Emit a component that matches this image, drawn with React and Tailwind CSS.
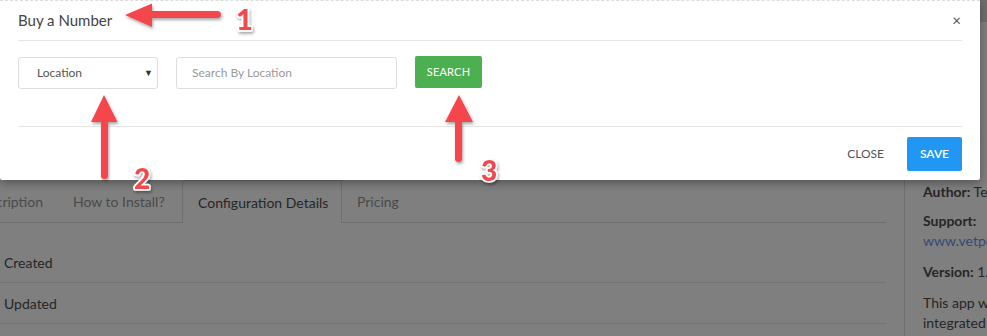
import React from "react";

function Arrows() {
  return (
    <svg
      className="absolute left-0 top-0 pointer-events-none"
      width="987"
      height="336"
      viewBox="0 0 987 336"
    >
      <defs>
        <filter id="sh" x="-20%" y="-20%" width="140%" height="140%">
          <feDropShadow dx="1" dy="2" stdDeviation="1.4" floodColor="#000" floodOpacity="0.35" />
        </filter>
      </defs>
      <g fill="#f5464c" filter="url(#sh)">
        <path d="M125 15 L152 3.5 L152 11 L217 11 Q221 11 221 14.5 Q221 18 217 18 L152 18 L152 27 Z" />
        <path d="M104 95 L117.5 122 L108 122 L108 176 Q108 179 104.5 179 Q101 179 101 176 L101 122 L91 122 Z" />
        <path d="M459 95 L473 122 L462 122 L462 159 Q462 162 458.5 162 Q455 162 455 159 L455 122 L445 122 Z" />
      </g>
      <g
        fontFamily="Lato, 'Open Sans', sans-serif"
        fontWeight="900"
        fill="#f5464c"
        stroke="#ffffff"
        strokeWidth="3.5"
        strokeLinejoin="round"
        style={{ paintOrder: "stroke" }}
        filter="url(#sh)"
      >
        <text x="236" y="30" fontSize="29">1</text>
        <text x="134" y="189" fontSize="28">2</text>
        <text x="481" y="181" fontSize="28">3</text>
      </g>
    </svg>
  );
}

export default function App() {
  return (
    <div className="relative w-[987px] h-[336px] overflow-hidden bg-[#7f7f7f] font-['Lato','Open_Sans',sans-serif]">
      {/* background page */}
      <div className="flex flex-col">
        <div className="h-[22px] bg-[#6f6f6f]" />
        <div className="flex">
          {/* main column */}
          <div className="w-[886px] shrink-0 pt-[158px]">
            <div className="flex h-[43px] border-b border-[#6e6e6e] text-[14px]">
              <div className="w-[58px] shrink-0 overflow-hidden flex justify-end items-center pr-[15px] text-[#4a4a4a]">
                <span className="whitespace-nowrap">Description</span>
              </div>
              <div className="flex shrink-0 items-center px-[15px] text-[#4a4a4a] whitespace-nowrap w-[124px]">
                How to Install?
              </div>
              <div className="flex shrink-0 items-center px-[15px] text-[#262626] whitespace-nowrap border-x border-t border-[#6e6e6e] -mb-px bg-[#7f7f7f] w-[160px]">
                Configuration Details
              </div>
              <div className="flex shrink-0 items-center px-[15px] text-[#4a4a4a] whitespace-nowrap">
                Pricing
              </div>
            </div>
            <div className="pt-[19px] text-[14px] text-[#262626]">
              <div className="h-[41px] flex items-center pl-[4px] border-b border-[#737373]">Created</div>
              <div className="h-[41px] flex items-center pl-[4px] border-b border-[#737373]">Updated</div>
              <div className="h-[41px] flex items-center pl-[4px]"></div>
            </div>
          </div>
          <div className="w-[18px] shrink-0" />
          {/* sidebar */}
          <div className="w-[200px] shrink-0 overflow-hidden border-l border-[#6e6e6e] pl-[18px] pt-[160px] text-[14px] text-[#262626] whitespace-nowrap leading-[20px]">
            <div><span className="font-bold">Author:</span> Team Vetport</div>
            <div className="mt-[9px] font-bold">Support:</div>
            <div className="text-[#334a78]">www.vetport.com</div>
            <div className="mt-[11px]"><span className="font-bold">Version:</span> 1.0</div>
            <div className="mt-[11px]">This app will help you</div>
            <div>integrated number</div>
          </div>
        </div>
      </div>

      {/* modal */}
      <div className="absolute left-0 top-0 w-[980px] h-[180px] bg-white rounded-b-[2px] shadow-[0_3px_10px_rgba(0,0,0,0.35)] border-t border-dashed border-[#dcdcdc] px-[18px]">
        <div className="h-[40px] flex items-center justify-between border-b border-[#e5e5e5]">
          <span className="text-[15px] text-[#444444]">Buy a Number</span>
          <span className="text-[15px] leading-none text-[#555555] mr-[1px]">×</span>
        </div>
        <div className="h-[86px] border-b border-[#e5e5e5] pt-[16px] flex items-start">
          <div className="w-[140px] h-[32px] border border-[#dddddd] rounded-[3px] flex items-center justify-between pl-[18px] pr-[4px] text-[12px] text-[#555555]">
            <span>Location</span>
            <span className="text-[9px] text-[#333333]">▼</span>
          </div>
          <div className="ml-[18px] w-[221px] h-[32px] border border-[#dddddd] rounded-[3px] flex items-center pl-[15px] text-[12px] text-[#9a9a9a]">
            Search By Location
          </div>
          <div className="ml-[18px] -mt-px w-[67px] h-[32px] bg-[#4caf50] rounded-[2px] flex items-center justify-center text-[11px] text-white tracking-[0.2px]">
            SEARCH
          </div>
        </div>
        <div className="flex justify-end items-start pt-[10px]">
          <div className="h-[34px] flex items-center text-[12px] text-[#555555] mr-[23px]">CLOSE</div>
          <div className="w-[55px] h-[34px] bg-[#2196f3] rounded-[2px] flex items-center justify-center text-[12px] font-semibold text-white">
            SAVE
          </div>
        </div>
      </div>

      <Arrows />
    </div>
  );
}
